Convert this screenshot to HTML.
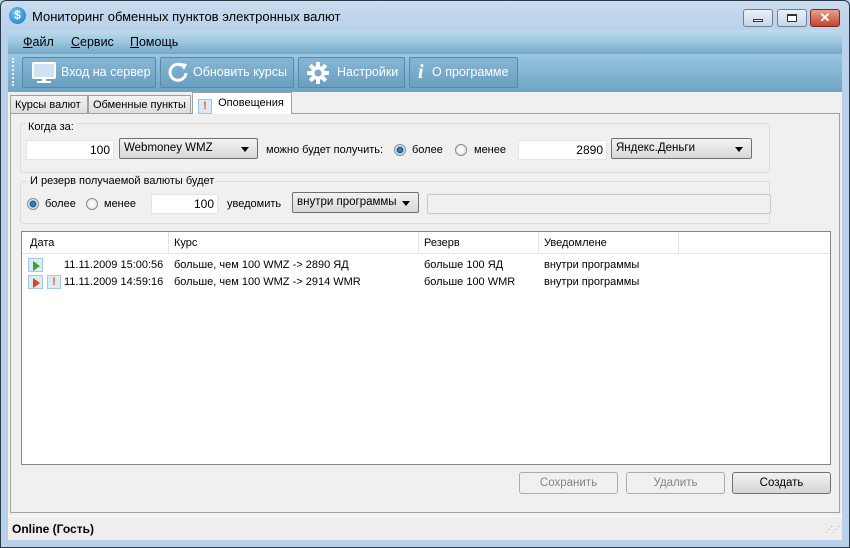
<!DOCTYPE html>
<html><head><meta charset="utf-8"><style>
*{margin:0;padding:0;box-sizing:border-box}
body{width:850px;height:548px;overflow:hidden;background:#b9d1ea;font-family:"Liberation Sans",sans-serif;font-size:11px;color:#000;position:relative;white-space:nowrap}
.a{position:absolute}
.frame{left:0;top:0;width:850px;height:548px;border:1px solid #2a3a4a;border-radius:6px 6px 0 0;background:linear-gradient(#c9dbee,#b9d1ea 30px)}
.title{left:32px;top:9px;font-size:13px;color:#000}
.wb{top:9px;height:18px;border:1px solid #6d7f94;border-radius:3px;background:linear-gradient(#e9f0f8,#c5d6ea)}
.menu{left:8px;top:30px;width:834px;height:24px;background:linear-gradient(#bfdcee,#9cc6df 50%,#73a8c8)}
.menu span{position:absolute;top:5px;font-size:12.5px}
.tool{left:8px;top:54px;width:834px;height:38px;background:linear-gradient(#9ac6e0,#6ea4c5)}
.tb{top:3px;height:31px;border:1px solid #5b88a8;border-radius:2px;background:linear-gradient(#86b6d4,#6a9fc1);color:#fff;font-size:12.5px;line-height:29px}
.client{left:8px;top:92px;width:834px;height:424px;background:#f0f0f0}
.tab{top:3px;height:19px;border:1px solid #a0a0a0;border-bottom:none;background:linear-gradient(#f2f2f2,#dcdcdc);line-height:18px;padding-left:4px}
.panel{left:2px;top:21px;width:830px;height:400px;border:1px solid #a0a0a0;background:#f0f0f0}
.grp{border:1px solid #dcdcdc;border-radius:3px}
.inp{background:#fff;border:1px solid #e2e3ea;text-align:right;padding-right:3px;height:20px;line-height:18px;font-size:12px}
.cb{border:1px solid #707070;border-radius:2px;background:linear-gradient(#f2f2f2,#d8d8d8);height:21px;line-height:19px;padding-left:4px;font-size:11.5px}
.cb:after{content:"";position:absolute;right:8px;top:8px;border:4px solid transparent;border-top:5px solid #000;border-bottom:0}
.rad{width:12px;height:12px;border-radius:50%;border:1px solid #8a8a8a;background:radial-gradient(#fff,#e0e0e0)}
.rad.on{background:radial-gradient(#3a8ed0 0,#1c5f9c 3px,#e9eef3 4px)}
.btn{height:22px;border:1px solid #acacac;border-radius:3px;background:#f0f0f0;color:#838383;text-align:center;line-height:20px;font-size:11.5px}
</style></head><body>
<div class="a frame"></div>
<div class="a" style="left:9px;top:7px;width:17px;height:17px;border-radius:50%;background:radial-gradient(circle at 40% 35%,#6cc4f5,#1478c8);color:#fff;font-weight:bold;font-size:12px;text-align:center;line-height:17px">$</div>
<div class="a title">Мониторинг обменных пунктов электронных валют</div>
<div class="a wb" style="left:743px;width:30px"><div class="a" style="left:9px;top:9px;width:10px;height:3px;border:1px solid #333;background:#fff"></div></div>
<div class="a wb" style="left:777px;width:30px"><div class="a" style="left:9px;top:4px;width:10px;height:8px;border:1px solid #333;border-top-width:2px;background:#fff"></div></div>
<div class="a wb" style="left:810px;width:30px;background:linear-gradient(#e8a090,#c7432e);border-color:#7a2a20;color:#fff;font-weight:bold;text-align:center;line-height:15px;font-size:13px">✕</div>

<div class="a menu"><span style="left:15px"><u>Ф</u>айл</span><span style="left:63px"><u>С</u>ервис</span><span style="left:122px"><u>П</u>омощь</span></div>
<div class="a tool">
 <div class="a" style="left:4px;top:4px;width:2px;height:28px;border-left:2px dotted #e8f2f8"></div>
 <div class="a tb" style="left:14px;width:134px"><svg class="a" style="left:9px;top:4px" width="24" height="22"><rect x="1" y="1" width="22" height="15" rx="1" fill="#cfe2ef" stroke="#fff" stroke-width="2"/><rect x="10" y="16" width="4" height="3" fill="#fff"/><rect x="5" y="19" width="14" height="2" fill="#fff"/></svg><span class="a" style="left:38px">Вход на сервер</span></div>
 <div class="a tb" style="left:152px;width:134px"><svg class="a" style="left:6px;top:4px" width="22" height="22"><path d="M16 4A8 8 0 1 0 19 11" fill="none" stroke="#fff" stroke-width="3"/><path d="M13 1L20 2L17 8Z" fill="#fff"/></svg><span class="a" style="left:32px">Обновить курсы</span></div>
 <div class="a tb" style="left:290px;width:107px"><svg class="a" style="left:8px;top:4px" width="22" height="22"><g fill="#fff"><circle cx="11" cy="11" r="7"/><rect x="9" y="0" width="4" height="22"/><rect x="0" y="9" width="22" height="4"/><rect x="9" y="0" width="4" height="22" transform="rotate(45 11 11)"/><rect x="9" y="0" width="4" height="22" transform="rotate(-45 11 11)"/></g><circle cx="11" cy="11" r="3.5" fill="#78aacb"/></svg><span class="a" style="left:38px">Настройки</span></div>
 <div class="a tb" style="left:401px;width:109px"><span class="a" style="left:8px;font-family:'Liberation Serif',serif;font-style:italic;font-weight:bold;font-size:20px">i</span><span class="a" style="left:22px">О программе</span></div>
</div>

<div class="a client">
 <div class="a tab" style="left:2px;width:78px">Курсы валют</div>
 <div class="a tab" style="left:80px;width:103px">Обменные пункты</div>
 <div class="a tab" style="left:184px;top:0;height:22px;width:100px;background:#fff;z-index:2;padding-left:5px;line-height:20px"><span style="display:inline-block;width:14px;height:15px;border:1px solid #9cc4e4;background:#dbeaf7;color:#f05a10;font-weight:bold;text-align:center;line-height:13px;vertical-align:-3px">!</span>&nbsp; Оповещения</div>
 <div class="a panel">
  <div class="a grp" style="left:9px;top:9px;width:750px;height:50px"></div>
  <div class="a" style="left:15px;top:7px;background:#f0f0f0;padding:0 2px">Когда за:</div>
  <div class="a inp" style="left:15px;top:26px;width:88px">100</div>
  <div class="a cb" style="left:108px;top:24px;width:139px">Webmoney WMZ</div>
  <div class="a" style="left:255px;top:30px">можно будет получить:</div>
  <div class="a rad on" style="left:383px;top:30px"></div><div class="a" style="left:401px;top:30px">более</div>
  <div class="a rad" style="left:444px;top:30px"></div><div class="a" style="left:463px;top:30px">менее</div>
  <div class="a inp" style="left:507px;top:26px;width:89px">2890</div>
  <div class="a cb" style="left:600px;top:24px;width:141px">Яндекс.Деньги</div>

  <div class="a grp" style="left:9px;top:67px;width:750px;height:43px"></div>
  <div class="a" style="left:17px;top:61px;background:#f0f0f0;padding:0 2px">И резерв получаемой валюты будет</div>
  <div class="a rad on" style="left:16px;top:84px"></div><div class="a" style="left:34px;top:84px">более</div>
  <div class="a rad" style="left:75px;top:84px"></div><div class="a" style="left:93px;top:84px">менее</div>
  <div class="a inp" style="left:140px;top:80px;width:67px">100</div>
  <div class="a" style="left:216px;top:84px">уведомить</div>
  <div class="a cb" style="left:281px;top:78px;width:127px">внутри программы</div>
  <div class="a" style="left:416px;top:80px;width:344px;height:20px;border:1px solid #c9c9c9;border-radius:2px;background:#f0f0f0"></div>

  <div class="a" style="left:10px;top:117px;width:810px;height:234px;border:1px solid #828790;background:#fff">
   <div class="a" style="left:0;top:0;width:808px;height:22px;border-bottom:1px solid #e5e5e5"></div>
   <div class="a" style="left:146px;top:0;width:1px;height:22px;background:#e5e5e5"></div>
   <div class="a" style="left:396px;top:0;width:1px;height:22px;background:#e5e5e5"></div>
   <div class="a" style="left:516px;top:0;width:1px;height:22px;background:#e5e5e5"></div>
   <div class="a" style="left:656px;top:0;width:1px;height:22px;background:#e5e5e5"></div>
   <div class="a" style="left:8px;top:5px">Дата</div>
   <div class="a" style="left:152px;top:5px">Курс</div>
   <div class="a" style="left:402px;top:5px">Резерв</div>
   <div class="a" style="left:522px;top:5px">Уведомлене</div>
   <div class="a" style="left:6px;top:26px;width:15px;height:14px;border:1px solid #a5c8e6;background:#dcebf8"><div class="a" style="left:4px;top:2px;border:5px solid transparent;border-left:7px solid #3aa32a;border-right:0"></div></div>
   <div class="a" style="left:42px;top:27px">11.11.2009 15:00:56</div>
   <div class="a" style="left:152px;top:27px">больше, чем 100 WMZ -&gt; 2890 ЯД</div>
   <div class="a" style="left:402px;top:27px">больше 100 ЯД</div>
   <div class="a" style="left:522px;top:27px">внутри программы</div>
   <div class="a" style="left:6px;top:43px;width:15px;height:14px;border:1px solid #a5c8e6;background:#dcebf8"><div class="a" style="left:4px;top:2px;border:5px solid transparent;border-left:7px solid #e8401a;border-right:0"></div></div>
   <div class="a" style="left:25px;top:43px;width:14px;height:14px;border:1px solid #a5c8e6;background:#dcebf8;color:#f05a10;font-weight:bold;text-align:center;line-height:12px">!</div>
   <div class="a" style="left:42px;top:44px">11.11.2009 14:59:16</div>
   <div class="a" style="left:152px;top:44px">больше, чем 100 WMZ -&gt; 2914 WMR</div>
   <div class="a" style="left:402px;top:44px">больше 100 WMR</div>
   <div class="a" style="left:522px;top:44px">внутри программы</div>
  </div>
  <div class="a btn" style="left:508px;top:358px;width:99px">Сохранить</div>
  <div class="a btn" style="left:615px;top:358px;width:99px">Удалить</div>
  <div class="a btn" style="left:721px;top:358px;width:99px;border-color:#707070;background:linear-gradient(#f2f2f2,#d5d5d5);color:#000">Создать</div>
 </div>
</div>
<div class="a" style="left:8px;top:516px;width:834px;height:24px;background:#f0eded;border-top:1px solid #fff"><span class="a" style="left:4px;top:5px;font-weight:bold;font-size:12px">Online (Гость)</span><span class="a" style="right:3px;top:8px;color:#999;font-size:8px;letter-spacing:-1px">⋰⋰</span></div>
</body></html>
